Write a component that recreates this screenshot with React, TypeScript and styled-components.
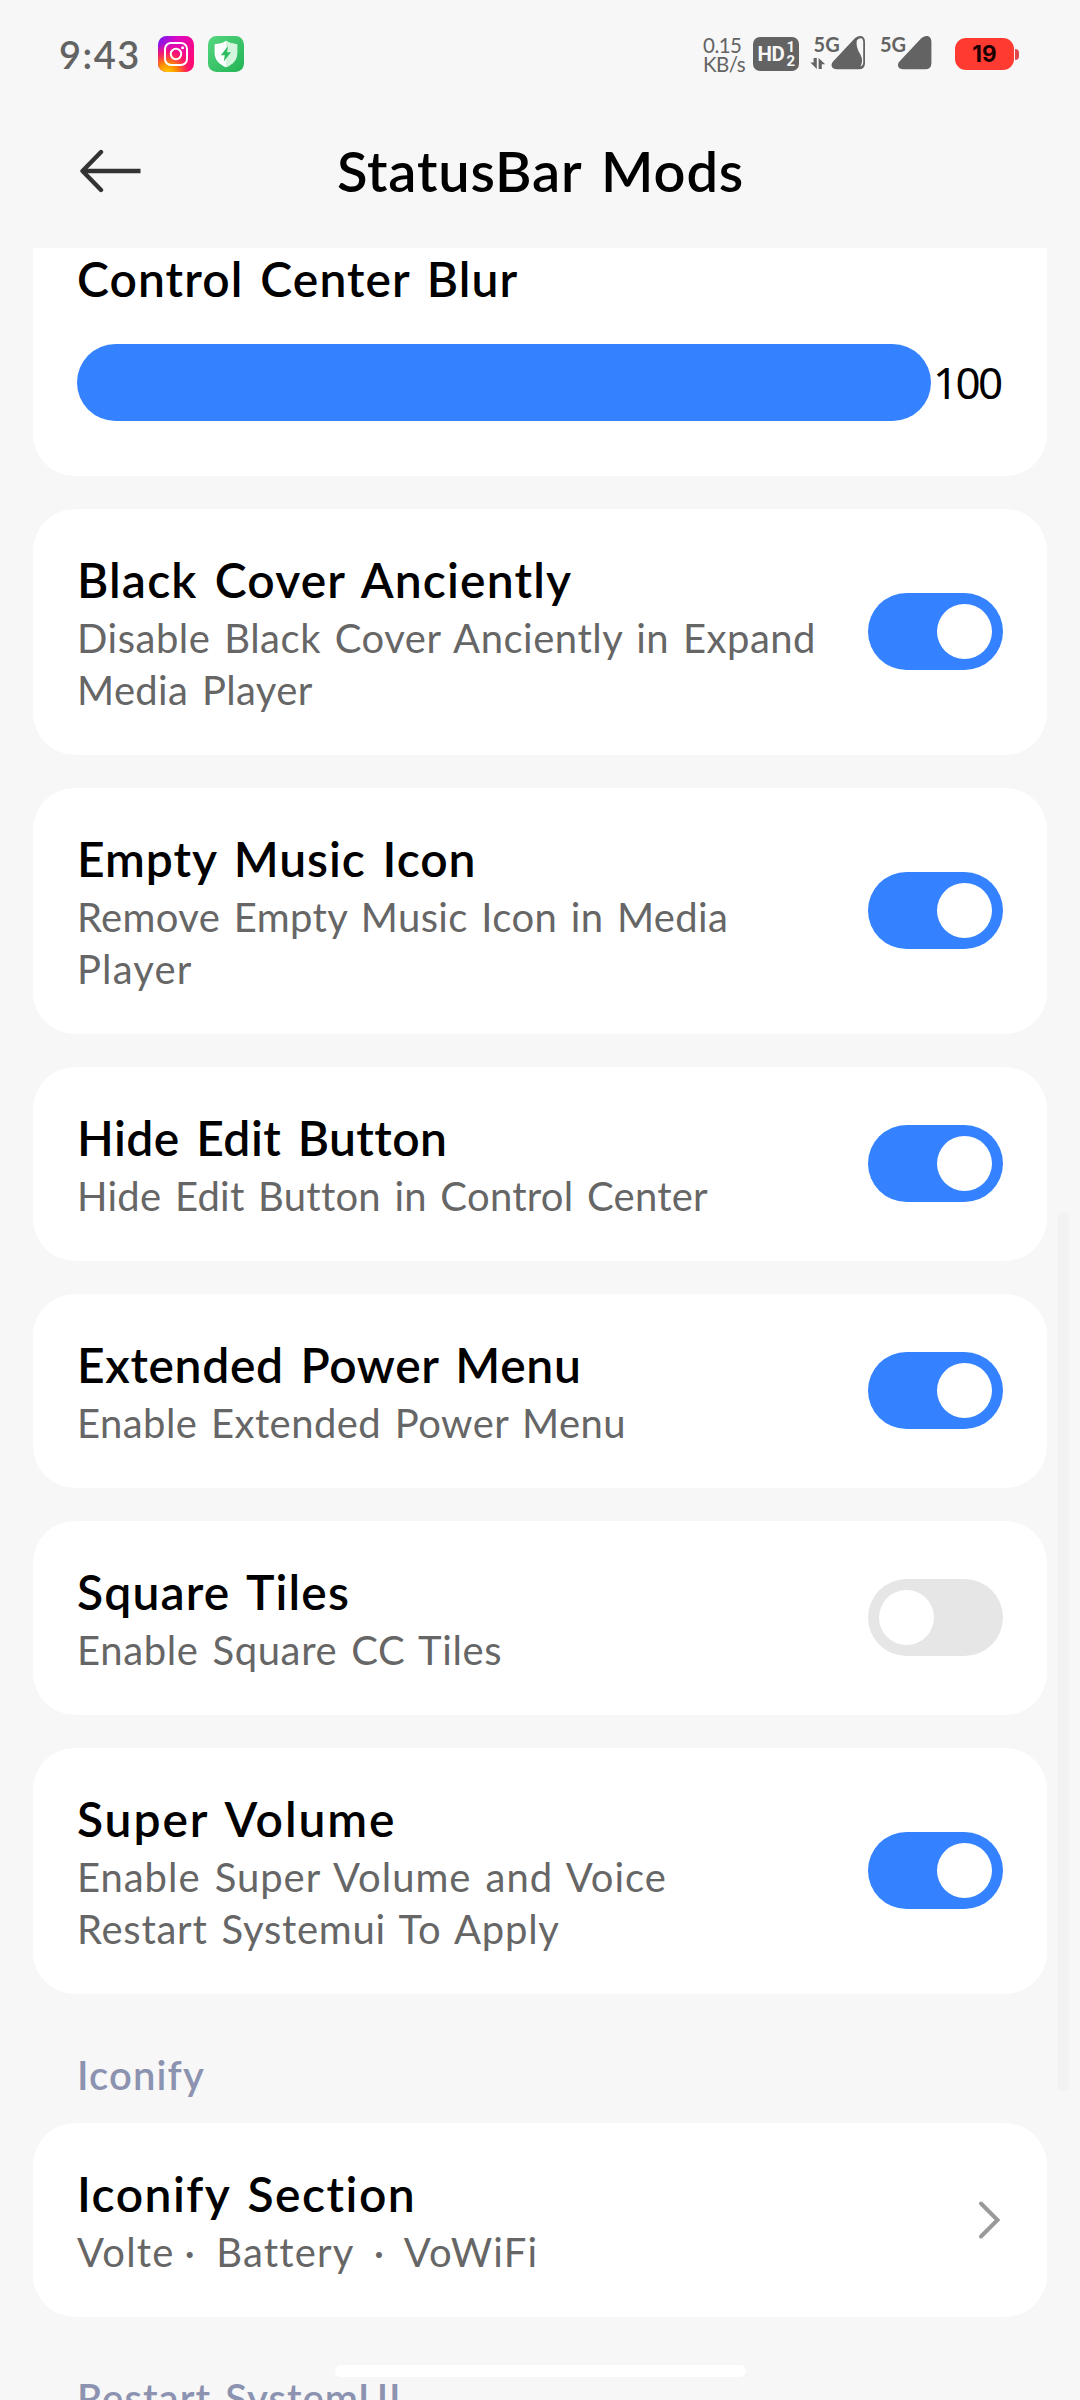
import React from "react";
import styled, { createGlobalStyle } from "styled-components";

const GlobalStyle = createGlobalStyle`
  * { box-sizing: border-box; }
  body { margin: 0; background: #f7f7f7; }
`;

const Screen = styled.div`
  position: relative;
  width: 1080px;
  height: 2400px;
  overflow: hidden;
  background: #f7f7f7;
  color: #000;
  font-family: Lato, "Noto Sans", sans-serif;
  display: flex;
  flex-direction: column;
`;

/* ---------- status bar ---------- */

const StatusBar = styled.div`
  height: 102px;
  flex: none;
  display: flex;
  align-items: flex-start;
  padding: 36px 61px 0 59px;
  color: #636363;
`;

const Clock = styled.div`
  width: 99px;
  font-size: 38px;
  font-weight: 600;
  line-height: 36px;
  letter-spacing: 1.5px;
`;

const AppIcons = styled.div`
  display: flex;
  gap: 14px;
  svg { display: block; }
`;

const Indicators = styled.div`
  margin-left: auto;
  display: flex;
  align-items: flex-start;
  svg { display: block; }
`;

const NetSpeed = styled.div`
  width: 50px;
  font-size: 20.5px;
  line-height: 18.5px;
  letter-spacing: -0.5px;
  white-space: nowrap;
  span { display: block; }
`;

const HdBadge = styled.div`
  width: 46px;
  height: 34px;
  margin: 1px 11px 0 0;
  border-radius: 7px;
  background: #636363;
  color: #f7f7f7;
  display: flex;
  align-items: center;
  justify-content: center;
  gap: 2px;
  font-family: Roboto, sans-serif;
  font-weight: 700;
  font-size: 20.5px;
  letter-spacing: -0.4px;
`;

const SimStack = styled.span`
  display: flex;
  flex-direction: column;
  font-size: 15px;
  line-height: 14px;
  text-align: center;
`;

const Signal = styled.svg<{ $gap: number }>`
  margin-right: ${(p) => p.$gap}px;
`;

const Battery = styled.div`
  display: flex;
  align-items: center;
  gap: 1px;
  margin-top: 2px;
`;

const BatteryBody = styled.div`
  width: 59px;
  height: 32px;
  border-radius: 11px;
  background: #ff3a30;
  color: #1a0000;
  font: 700 22.5px/32px Inter, Roboto, sans-serif;
  text-align: center;
`;

const BatteryTip = styled.div`
  width: 4px;
  height: 11px;
  border-radius: 0 6px 6px 0;
  background: #e2474a;
`;

/* ---------- header ---------- */

const Header = styled.header`
  height: 146px;
  flex: none;
  display: grid;
  grid-template-columns: 1fr auto 1fr;
  align-items: center;
  padding: 0 77px 8px 78px;
  svg { display: block; }
`;

const PageTitle = styled.h1`
  margin: 0;
  font-size: 56px;
  font-weight: 600;
  line-height: 72px;
  letter-spacing: 0.85px;
  word-spacing: 5px;
`;

/* ---------- list ---------- */

const List = styled.main`
  flex: none;
  padding: 0 33px;
  display: flex;
  flex-direction: column;
`;

const Card = styled.section`
  display: flex;
  align-items: center;
  justify-content: space-between;
  padding: 39px 44px 39px 43px;
  border-radius: 42px;
  background: #fff;
  & + & { margin-top: 33px; }
`;

const SliderCard = styled(Card)`
  display: block;
  padding: 0 0 55px 43px;
  border-radius: 0 0 42px 42px;
`;

const Name = styled.div<{ $track: number; $lh?: number }>`
  padding-left: 1px;
  font-size: 48px;
  font-weight: 600;
  line-height: ${(p) => p.$lh ?? 64}px;
  letter-spacing: ${(p) => p.$track - 0.56}px;
  word-spacing: 4px;
  white-space: nowrap;
`;

const SummaryLine = styled.div<{ $track: number; $word?: number }>`
  padding-left: 1px;
  font-size: 40px;
  line-height: 52px;
  letter-spacing: ${(p) => p.$track - 0.46}px;
  word-spacing: ${(p) => p.$word ?? 3}px;
  white-space: pre;
  color: #666;
`;

const SliderRow = styled.div`
  display: flex;
  align-items: center;
  margin: 34px 0 0 1px;
`;

const SliderTrack = styled.div`
  width: 854px;
  height: 77px;
  border-radius: 39px;
  background: #3482ff;
`;

const SliderValue = styled.div`
  padding-left: 2px;
  font-family: "Noto Sans", sans-serif;
  font-size: 44px;
  line-height: 77px;
  letter-spacing: -2.7px;
`;

const Switch = styled.div<{ $on: boolean }>`
  flex: none;
  width: 135px;
  height: 77px;
  margin-bottom: 1px;
  padding: 11px;
  border-radius: 39px;
  display: flex;
  justify-content: ${(p) => (p.$on ? "flex-end" : "flex-start")};
  background: ${(p) => (p.$on ? "#3482ff" : "#e6e6e6")};
`;

const Knob = styled.div`
  width: 55px;
  height: 55px;
  border-radius: 50%;
  background: #fff;
`;

const SectionLabel = styled.h2<{ $track: number }>`
  margin: 0;
  padding: 55px 43px 22px 44px;
  font-size: 40px;
  font-weight: 600;
  line-height: 52px;
  letter-spacing: ${(p) => p.$track - 0.6}px;
  word-spacing: 3px;
  color: #8c93b0;
`;

/* ---------- overlays ---------- */

const ScrollThumb = styled.div`
  position: absolute;
  right: 11px;
  top: 1212px;
  width: 11px;
  height: 879px;
  border-radius: 6px;
  background: #f2f2f2;
`;

const HomeBar = styled.div`
  position: absolute;
  left: 335px;
  bottom: 23px;
  width: 411px;
  height: 12px;
  border-radius: 6px;
  background: #fff;
`;

type Line = [text: string, track: number];
interface Item { name: Line; summary: Line[]; on: boolean }

const items: Item[] = [
  { name: ["Black Cover Anciently", 1.73], summary: [["Disable Black Cover Anciently in Expand", 0.98], ["Media Player", 0.82]], on: true },
  { name: ["Empty Music Icon", 1.5], summary: [["Remove Empty Music Icon in Media", 0.82], ["Player", 1.62]], on: true },
  { name: ["Hide Edit Button", 1.02], summary: [["Hide Edit Button in Control Center", 0.72]], on: true },
  { name: ["Extended Power Menu", 1.21], summary: [["Enable Extended Power Menu", 0.9]], on: true },
  { name: ["Square Tiles", 1.69], summary: [["Enable Square CC Tiles", 1.1]], on: false },
  { name: ["Super Volume", 2.45], summary: [["Enable Super Volume and Voice", 1.42], ["Restart Systemui To Apply", 1.2]], on: true },
];

const SIGNAL = "M23.3 27.3 L44.6 4.6 C48.5 0.4 55 1 55 7.8 V29 Q55 35.3 48.7 35.3 H27 C21.5 35.3 20 30.8 23.3 27.3Z";

function InstagramIcon() {
  return (
    <svg width="36" height="36" viewBox="0 0 36 36">
      <defs>
        <linearGradient id="igBase" x1="0" y1="0" x2="1" y2="0.6">
          <stop offset="0" stopColor="#6a1cf5" />
          <stop offset="0.4" stopColor="#d908c4" />
          <stop offset="1" stopColor="#ff0a78" />
        </linearGradient>
        <radialGradient id="igWarm" cx="0.25" cy="1.05" r="0.85">
          <stop offset="0" stopColor="#ffd600" />
          <stop offset="0.35" stopColor="#ff8a00" />
          <stop offset="0.7" stopColor="#ff1a5e" stopOpacity="0.8" />
          <stop offset="1" stopColor="#ff0a78" stopOpacity="0" />
        </radialGradient>
      </defs>
      <rect width="36" height="36" rx="8.5" fill="url(#igBase)" />
      <rect width="36" height="36" rx="8.5" fill="url(#igWarm)" />
      <rect x="7" y="7" width="22" height="22" rx="6" fill="none" stroke="#fff" strokeWidth="2" />
      <circle cx="18" cy="18" r="5.2" fill="none" stroke="#fff" strokeWidth="2" />
      <circle cx="24.6" cy="11.7" r="1.5" fill="#fff" />
    </svg>
  );
}

function SecurityIcon() {
  return (
    <svg width="36" height="36" viewBox="0 0 36 36">
      <defs>
        <linearGradient id="secBase" x1="0" y1="0" x2="1" y2="1">
          <stop offset="0" stopColor="#55d67f" />
          <stop offset="1" stopColor="#22b455" />
        </linearGradient>
      </defs>
      <rect width="36" height="36" rx="8.5" fill="url(#secBase)" />
      <path d="M18 4.8 C21 7.2 25 8 29.2 8.2 V17 C29.2 24 24.5 28.6 18 31.2 C11.5 28.6 6.6 24 6.6 17 V8.2 C11 8 15 7.2 18 4.8Z" fill="#fff" />
      <path d="M18 4.8 C21 7.2 25 8 29.2 8.2 V17 C29.2 24 24.5 28.6 18 31.2Z" fill="#d3f5de" />
      <path d="M20 10.2 L12.8 19.2 H16.8 L15.8 25.6 L23 16.2 H19Z" fill="#2dbd5f" />
    </svg>
  );
}

export default function App() {
  return (
    <Screen>
      <GlobalStyle />
      <StatusBar>
        <Clock>9:43</Clock>
        <AppIcons>
          <InstagramIcon />
          <SecurityIcon />
        </AppIcons>
        <Indicators>
          <NetSpeed>
            <span>0.15</span>
            <span>KB/s</span>
          </NetSpeed>
          <HdBadge>
            HD
            <SimStack>
              <span>1</span>
              <span>2</span>
            </SimStack>
          </HdBadge>
          <Signal $gap={15} width="55" height="36" viewBox="0 2 55 36" overflow="visible">
            <text x="3.6" y="18" fontSize="20" fontWeight="700" fontFamily="Lato, sans-serif" fill="#636363">5G</text>
            <path d="M6.8 24 V35 L0.4 28.6 H3.6 V24Z M8.6 35 V24 L15.2 30.2 H11.8 V35Z" fill="#636363" />
            <path d={SIGNAL} fill="#636363" />
            <path d="M46.8 6.6 Q49.4 3.4 52 4.6 Q53.2 6 53.2 8 V29 Q53.2 31.8 50.4 32.8 Q53.6 26.5 50.4 20.5 Q45.6 13.5 46.8 6.6Z" fill="#f7f7f7" />
          </Signal>
          <Signal $gap={23} width="52" height="36" viewBox="0 2 52 36" overflow="visible">
            <text x="0" y="18" fontSize="20" fontWeight="700" fontFamily="Lato, sans-serif" fill="#636363">5G</text>
            <path d={SIGNAL} transform="translate(-3.6 0)" fill="#636363" />
          </Signal>
          <Battery>
            <BatteryBody>19</BatteryBody>
            <BatteryTip />
          </Battery>
        </Indicators>
      </StatusBar>

      <Header>
        <svg width="64" height="44" viewBox="0 0 64 44" fill="none" stroke="#333" strokeWidth="4.4" strokeLinecap="round" strokeLinejoin="round">
          <path d="M23 3 L4.5 22 L23 41" />
          <path d="M4.5 22 H62.5" strokeLinecap="butt" />
        </svg>
        <PageTitle>StatusBar Mods</PageTitle>
      </Header>

      <List>
        <SliderCard>
          <Name $track={1.63} $lh={62}>Control Center Blur</Name>
          <SliderRow>
            <SliderTrack />
            <SliderValue>100</SliderValue>
          </SliderRow>
        </SliderCard>

        {items.map((item) => (
          <Card key={item.name[0]}>
            <div>
              <Name $track={item.name[1]}>{item.name[0]}</Name>
              {item.summary.map(([text, track]) => (
                <SummaryLine key={text} $track={track}>{text}</SummaryLine>
              ))}
            </div>
            <Switch $on={item.on}><Knob /></Switch>
          </Card>
        ))}

        <SectionLabel $track={1.73}>Iconify</SectionLabel>
        <Card>
          <div>
            <Name $track={2.03}>Iconify Section</Name>
            <SummaryLine $track={1.65} $word={-1.4}>{"Volte ·  Battery  ·  VoWiFi"}</SummaryLine>
          </div>
          <svg width="26" height="40" viewBox="0 0 26 40" fill="none" stroke="#999" strokeWidth="4" strokeLinecap="round" strokeLinejoin="miter">
            <path d="M4 3.5 L20.5 20 L4 36.5" />
          </svg>
        </Card>
        <SectionLabel $track={1.64}>Restart SystemUI</SectionLabel>
      </List>

      <ScrollThumb />
      <HomeBar />
    </Screen>
  );
}
